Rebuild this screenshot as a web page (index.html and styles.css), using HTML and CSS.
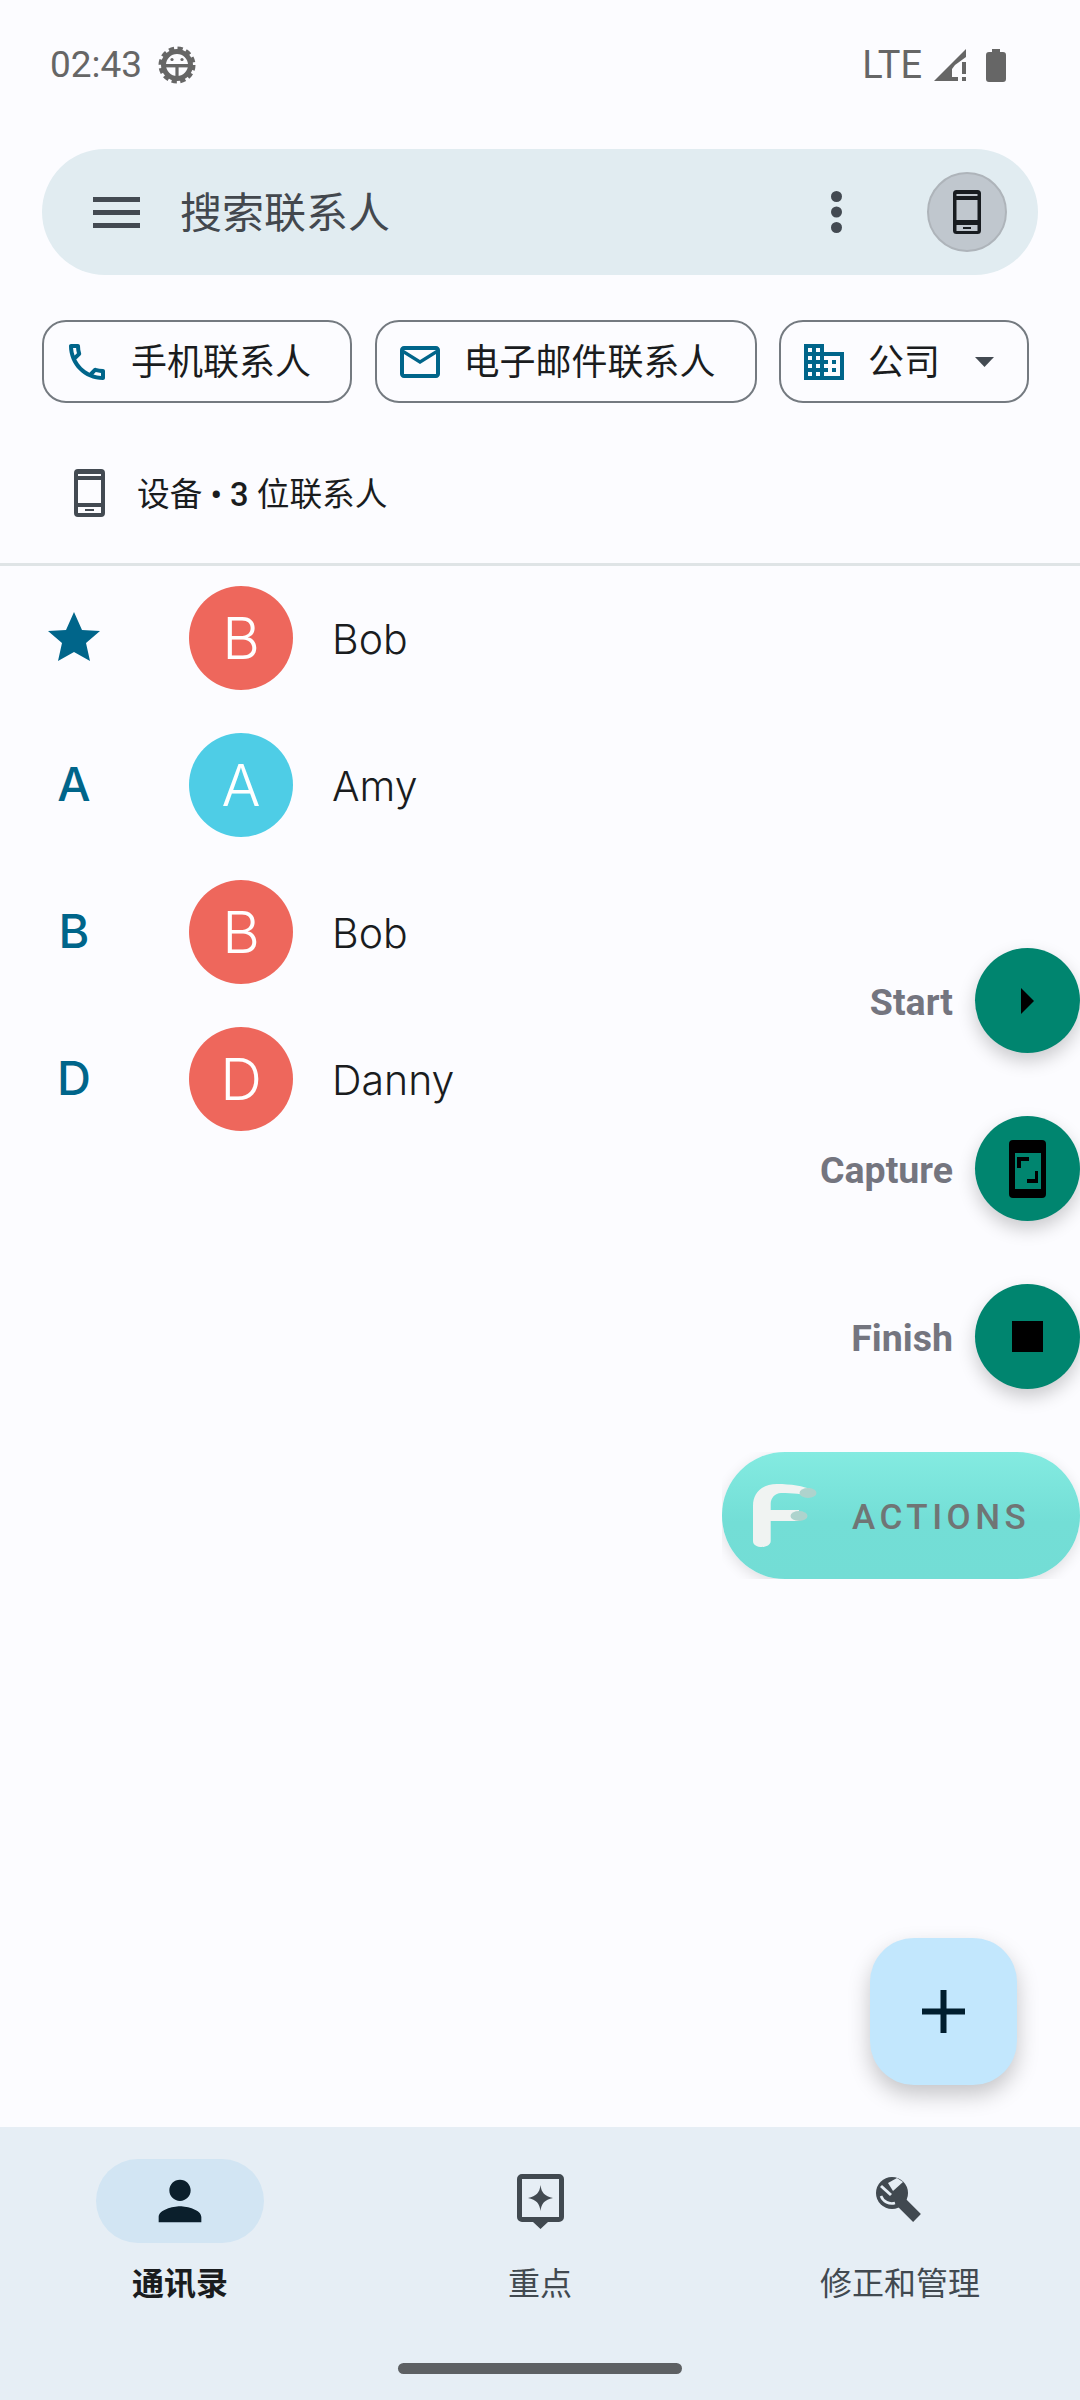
FILE: index.html
```html
<!DOCTYPE html>
<html lang="zh">
<head>
<meta charset="utf-8">
<title>通讯录</title>
<link rel="stylesheet" href="styles.css">
</head>
<body>
<div class="page">
  <header class="status">
    <div class="status-left">
      <span class="time">02:43</span>
      <svg class="gear" viewBox="0 0 38 38">
        <circle cx="19" cy="19" r="13.5" fill="none" stroke="#666" stroke-width="5"/>
        <circle cx="19" cy="19" r="16.5" fill="none" stroke="#666" stroke-width="4" stroke-dasharray="5.2 3.44"/>
        <rect x="7" y="18" width="24" height="3.4" fill="#666"/>
        <rect x="17.4" y="18" width="3.2" height="14" fill="#666"/>
        <circle cx="14" cy="13.5" r="1.6" fill="#666"/>
        <circle cx="24" cy="13.5" r="1.6" fill="#666"/>
      </svg>
    </div>
    <div class="status-right">
      <span class="lte">LTE</span>
      <svg class="signal" viewBox="0 0 33 32">
        <path d="M0 32 32 0v8l-11 8-3 4v8h6v4z" fill="#666"/>
        <rect x="28" y="13" width="4" height="12" fill="#666"/>
        <rect x="28" y="28" width="4" height="4" fill="#666"/>
      </svg>
      <svg class="battery" viewBox="0 0 20 33">
        <path d="M6 0h8v3h3a3 3 0 0 1 3 3v24a3 3 0 0 1-3 3H3a3 3 0 0 1-3-3V6a3 3 0 0 1 3-3h3z" fill="#666"/>
      </svg>
    </div>
  </header>

  <div class="search">
    <svg class="menu-icon" viewBox="0 0 47 31">
      <path d="M0 0h47v5H0zM0 13h47v5H0zM0 26h47v5H0z" fill="#434a52"/>
    </svg>
    <span class="search-text">搜索联系人</span>
    <svg class="dots" viewBox="0 0 11 42">
      <circle cx="5.5" cy="5.5" r="5.5" fill="#434a52"/>
      <circle cx="5.5" cy="21" r="5.5" fill="#434a52"/>
      <circle cx="5.5" cy="36.5" r="5.5" fill="#434a52"/>
    </svg>
    <div class="account">
      <svg class="account-phone" viewBox="0 0 28 44">
        <path fill-rule="evenodd" d="M3.5 0h21a3.5 3.5 0 0 1 3.5 3.5v37a3.5 3.5 0 0 1-3.5 3.5h-21A3.5 3.5 0 0 1 0 40.5v-37A3.5 3.5 0 0 1 3.5 0zM3.5 4v2h21V4zM3.5 10v20h21V10zM3.5 35v6h21v-6z" fill="#181c20"/>
        <rect x="10" y="37" width="8" height="2" fill="#181c20"/>
      </svg>
    </div>
  </div>

  <nav class="chips">
    <div class="chip">
      <svg class="chip-icon" viewBox="0 0 24 24"><path d="M6.54 5c.06.89.21 1.76.45 2.59l-1.2 1.2c-.41-1.2-.67-2.47-.76-3.79h1.51m9.86 12.02c.85.24 1.72.39 2.6.45v1.49c-1.32-.09-2.59-.35-3.8-.75l1.2-1.19M7.5 3H4c-.55 0-1 .45-1 1 0 9.39 7.61 17 17 17 .55 0 1-.45 1-1v-3.49c0-.55-.45-1-1-1-1.24 0-2.45-.2-3.57-.57-.1-.04-.21-.05-.31-.05-.26 0-.51.1-.71.29l-2.2 2.2c-2.83-1.45-5.15-3.76-6.59-6.59l2.2-2.2c.28-.28.36-.67.25-1.02C8.7 6.45 8.5 5.25 8.5 4c0-.55-.45-1-1-1z"/></svg>
      <span class="chip-text">手机联系人</span>
    </div>
    <div class="chip">
      <svg class="chip-icon" viewBox="0 0 24 24"><path d="M22 6c0-1.1-.9-2-2-2H4c-1.1 0-2 .9-2 2v12c0 1.1.9 2 2 2h16c1.1 0 2-.9 2-2V6zm-2 0l-8 5-8-5h16zm0 12H4V8l8 5 8-5v10z"/></svg>
      <span class="chip-text">电子邮件联系人</span>
    </div>
    <div class="chip chip-menu">
      <svg class="chip-icon" viewBox="0 0 24 24"><path d="M12 7V3H2v18h20V7H12zM6 19H4v-2h2v2zm0-4H4v-2h2v2zm0-4H4V9h2v2zm0-4H4V5h2v2zm4 12H8v-2h2v2zm0-4H8v-2h2v2zm0-4H8V9h2v2zm0-4H8V5h2v2zm10 12h-8v-2h2v-2h-2v-2h2v-2h-2V9h8v10zm-2-8h-2v2h2v-2zm0 4h-2v2h2v-2z"/></svg>
      <span class="chip-text">公司</span>
      <svg class="caret" viewBox="0 0 19 10"><path d="M0 0h19L9.5 10z" fill="#434a52"/></svg>
    </div>
  </nav>

  <div class="device">
    <svg class="device-icon" viewBox="0 0 31 48">
      <path fill-rule="evenodd" d="M4 0h23a4 4 0 0 1 4 4v40a4 4 0 0 1-4 4H4a4 4 0 0 1-4-4V4a4 4 0 0 1 4-4zM4 5v2h23V5zM4 11v23h23V11zM4 38v6h23v-6z" fill="#434a52"/>
      <rect x="11" y="40" width="9" height="2" fill="#434a52"/>
    </svg>
    <span class="device-text">设备 <b class="device-count">• 3</b> 位联系人</span>
  </div>

  <main class="list">
    <div class="row">
      <div class="index"><svg class="star" viewBox="0 0 52 50"><path d="M26 0l8 18 18 1-14 12 4 18-16-9-16 9 4-18L0 19l18-1z"/></svg></div>
      <div class="avatar avatar-red">B</div>
      <div class="name">Bob</div>
    </div>
    <div class="row">
      <div class="index">A</div>
      <div class="avatar avatar-cyan">A</div>
      <div class="name">Amy</div>
    </div>
    <div class="row">
      <div class="index">B</div>
      <div class="avatar avatar-red">B</div>
      <div class="name">Bob</div>
    </div>
    <div class="row">
      <div class="index">D</div>
      <div class="avatar avatar-red">D</div>
      <div class="name">Danny</div>
    </div>
  </main>

  <footer class="bottom">
    <div class="tabs">
      <div class="tab tab-active">
        <div class="tab-icon">
          <svg class="person" viewBox="0 0 24 24"><path d="M12 12c2.21 0 4-1.79 4-4s-1.79-4-4-4-4 1.79-4 4 1.79 4 4 4zm0 2c-2.67 0-8 1.34-8 4v2h16v-2c0-2.66-5.33-4-8-4z" fill="#0b1f2c"/></svg>
        </div>
        <span class="tab-label">通讯录</span>
      </div>
      <div class="tab">
        <div class="tab-icon">
          <svg class="highlight" viewBox="0 0 47 55">
            <path fill-rule="evenodd" d="M5 0h37a5 5 0 0 1 5 5v38a5 5 0 0 1-5 5h-11l-7.5 7-7.5-7H5a5 5 0 0 1-5-5V5a5 5 0 0 1 5-5zM5 5v38h37V5z" fill="#414950"/>
            <path d="M23.5 11c1 8 4 11 12.5 13-8.5 2-11.5 5-12.5 13-1-8-4-11-12.5-13 8.5-2 11.5-5 12.5-13z" fill="#414950"/>
          </svg>
        </div>
        <span class="tab-label">重点</span>
      </div>
      <div class="tab">
        <div class="tab-icon">
          <svg class="wrench" viewBox="0 0 48 48">
            <circle cx="16" cy="16" r="16" fill="#414950"/>
            <path d="M22 22 41 41" stroke="#414950" stroke-width="11" fill="none"/>
            <path d="M12 6 17 14 27 5 21 1z" fill="#e6eef5"/>
            <path d="M5 9 15 18" stroke="#e6eef5" stroke-width="3" fill="none"/>
            <path d="M5 19A11.5 11.5 0 0 0 19 26" stroke="#e6eef5" stroke-width="2.6" fill="none"/>
          </svg>
        </div>
        <span class="tab-label">修正和管理</span>
      </div>
    </div>
    <div class="home-bar"></div>
  </footer>

  <aside class="actions">
    <div class="action">
      <span class="action-label">Start</span>
      <div class="action-btn"><svg class="play" viewBox="0 0 13 26"><path d="M0 0l13 13L0 26z"/></svg></div>
    </div>
    <div class="action">
      <span class="action-label">Capture</span>
      <div class="action-btn">
        <svg class="capture" viewBox="0 0 37 58">
          <path fill-rule="evenodd" d="M4 0h29a4 4 0 0 1 4 4v50a4 4 0 0 1-4 4H4a4 4 0 0 1-4-4V4a4 4 0 0 1 4-4zM6 13v36h26V13z"/>
          <path d="M8 17h12v4h-8v7H8zM29 43H18v-4h8v-8h3z"/>
        </svg>
      </div>
    </div>
    <div class="action">
      <span class="action-label">Finish</span>
      <div class="action-btn"><div class="stop"></div></div>
    </div>
    <div class="pill-clip">
      <div class="pill">
        <svg class="flogo" viewBox="0 0 64 64">
          <path d="M0 56V22C0 8 10 0 24 0C38 0 50 2 60 6L56 12C50 10 40 9 28 9C22 9 17.7 14 17.7 20V26H46V37H17.7V57C17.7 65 0 65 0 57z" fill="#f0f3f2"/>
          <ellipse cx="55" cy="9" rx="8.5" ry="5" fill="#aed3cd"/>
          <ellipse cx="46" cy="32" rx="8.5" ry="5" fill="#aed3cd"/>
        </svg>
        <span class="pill-text">ACTIONS</span>
      </div>
    </div>
  </aside>

  <div class="fab"><svg class="plus" viewBox="0 0 43 43"><path d="M18.5 0h6v18.5H43v6H24.5V43h-6V24.5H0v-6h18.5z" fill="#001e2e"/></svg></div>
</div>
</body>
</html>
```

FILE: styles.css
```css
* { box-sizing: border-box; }
html, body { margin: 0; padding: 0; }
body {
  background: #fcfcff;
  font-family: Roboto, "Noto Sans CJK SC", sans-serif;
  color: #1a1c1e;
}
.page {
  position: relative;
  width: 1080px;
  height: 2400px;
  overflow: hidden;
  display: flex;
  flex-direction: column;
  background: #fcfcff;
}

/* status bar */
.status {
  height: 130px;
  flex: none;
  display: flex;
  align-items: center;
  justify-content: space-between;
  padding: 0 74px 0 50px;
  color: #666;
}
.status-left, .status-right { display: flex; align-items: center; }
.time { font-size: 37px; line-height: 44px; }
.gear { width: 38px; height: 38px; margin-left: 16px; }
.lte { font-size: 38px; line-height: 44px; font-weight: 400; }
.signal { width: 33px; height: 32px; margin-left: 12px; }
.battery { width: 20px; height: 33px; margin-left: 19px; }

/* search */
.search {
  flex: none;
  margin: 19px 42px 0;
  height: 126px;
  border-radius: 63px;
  background: #e1ecf1;
  display: flex;
  align-items: center;
  padding-left: 51px;
}
.menu-icon { width: 47px; height: 31px; flex: none; }
.search-text {
  margin-left: 40px;
  padding-top: 4px;
  font-size: 42px;
  line-height: 56px;
  color: #43484e;
  flex: 1;
}
.dots { width: 11px; height: 42px; flex: none; margin-right: 85px; }
.account {
  width: 80px;
  height: 80px;
  margin-right: 31px;
  border-radius: 50%;
  background: #c0c7ce;
  border: 2px solid #aeb4ba;
  display: flex;
  align-items: center;
  justify-content: center;
  flex: none;
}
.account-phone { width: 28px; height: 44px; }

/* chips */
.chips {
  flex: none;
  display: flex;
  gap: 22.5px;
  margin: 45px 0 0 42px;
}
.chip {
  height: 83px;
  display: flex;
  align-items: center;
  gap: 20px;
  padding: 0 39px 0 19px;
  border: 2px solid #747a80;
  border-radius: 24px;
  font-size: 36px;
  line-height: 48px;
  color: #1a1c1e;
}
.chip-text { padding-top: 3px; }
.chip-menu { padding-right: 33px; }
.chip-icon { width: 48px; height: 48px; fill: #00658a; flex: none; }
.caret { width: 19px; height: 10px; margin-left: 15px; }

/* device row */
.device {
  flex: none;
  height: 163px;
  padding: 20px 0 0 74px;
  border-bottom: 3px solid #dfe4e6;
  display: flex;
  align-items: center;
  gap: 32px;
}
.device-icon { width: 31px; height: 48px; }
.device-text { font-size: 32.7px; line-height: 44px; color: #1a1c1e; padding-top: 3px; }
.device-count { font-weight: 500; }

/* list */
.list {
  flex: 1;
  display: flex;
  flex-direction: column;
  gap: 43px;
  padding-top: 20px;
}
.row {
  height: 104px;
  display: grid;
  grid-template-columns: 148px 104px 1fr;
  column-gap: 41px;
  align-items: center;
}
.index {
  font-family: Inter, Roboto, sans-serif;
  font-size: 47px;
  font-weight: 500;
  line-height: 56px;
  color: #00658a;
  display: flex;
  justify-content: center;
  padding-bottom: 3px;
}
.star { width: 52px; height: 50px; fill: #00658a; }
.avatar {
  width: 104px;
  height: 104px;
  border-radius: 50%;
  color: #fff;
  font-family: Inter, Roboto, sans-serif;
  font-size: 58px;
  font-weight: 300;
  display: flex;
  align-items: center;
  justify-content: center;
}
.avatar-red { background: #ee675c; }
.avatar-cyan { background: #4ecde6; }
.name {
  font-family: Inter, Roboto, sans-serif;
  font-size: 41px;
  font-weight: 350;
  line-height: 50px;
  color: #1a1c1e;
  margin: 2px 0 0 -2px;
}

/* bottom nav */
.bottom {
  flex: none;
  height: 273px;
  background: #e6eef5;
  display: flex;
  flex-direction: column;
  align-items: center;
}
.tabs { display: flex; width: 100%; padding-top: 32px; }
.tab {
  flex: 1;
  display: flex;
  flex-direction: column;
  align-items: center;
}
.tab-icon {
  width: 168px;
  height: 84px;
  border-radius: 42px;
  display: flex;
  align-items: center;
  justify-content: center;
}
.tab-active .tab-icon { background: #d2e5f3; }
.tab-label {
  margin-top: 19px;
  font-size: 32px;
  line-height: 44px;
  color: #414950;
}
.tab-active .tab-label { font-weight: 700; color: #1a1c1e; }
.person { width: 64px; height: 64px; }
.highlight { width: 47px; height: 55px; }
.wrench { width: 48px; height: 48px; }
.home-bar {
  margin-top: 57px;
  width: 284px;
  height: 11px;
  border-radius: 6px;
  background: #5d6063;
}

/* floating actions */
.actions {
  position: absolute;
  top: 948px;
  right: 0;
  display: flex;
  flex-direction: column;
  align-items: flex-end;
  gap: 63px;
}
.action { display: flex; align-items: center; gap: 22px; }
.action-label {
  font-size: 37.5px;
  line-height: 44px;
  padding-top: 3px;
  font-weight: 700;
  color: #74757f;
}
.action-btn {
  width: 105px;
  height: 105px;
  border-radius: 50%;
  background: #00856f;
  box-shadow: 0 8px 18px rgba(0, 0, 0, 0.2);
  display: flex;
  align-items: center;
  justify-content: center;
}
.play { width: 13px; height: 26px; }
.capture { width: 37px; height: 58px; }
.stop { width: 31px; height: 31px; background: #000; }
.pill-clip { width: 358px; height: 127px; overflow: hidden; }
.pill {
  width: 358px;
  height: 127px;
  border-radius: 63px;
  background: linear-gradient(180deg, #84ebe1 0%, #73ded6 55%, #73ddd5 100%);
  box-shadow: 0 4px 14px rgba(0, 0, 0, 0.12);
  display: flex;
  align-items: center;
  padding-left: 31px;
}
.flogo { width: 64px; height: 64px; flex: none; }
.pill-text {
  margin-left: 35px;
  padding-top: 3px;
  font-size: 35px;
  font-weight: 500;
  letter-spacing: 4.5px;
  color: #707575;
}

/* add fab */
.fab {
  position: absolute;
  left: 870px;
  top: 1938px;
  width: 147px;
  height: 147px;
  border-radius: 44px;
  background: #c2e7fd;
  box-shadow: 0 10px 22px rgba(0, 0, 0, 0.22);
  display: flex;
  align-items: center;
  justify-content: center;
}
.plus { width: 43px; height: 43px; }
```
